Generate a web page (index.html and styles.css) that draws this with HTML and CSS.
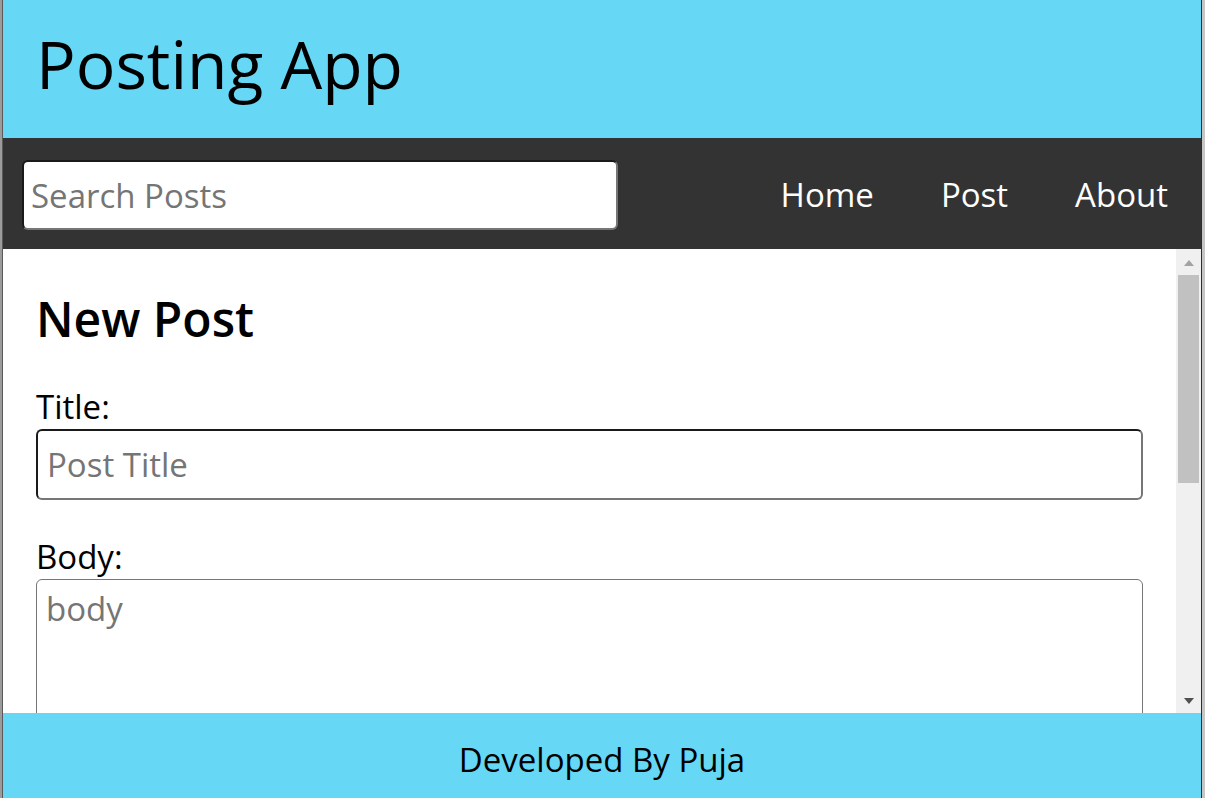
FILE: index.html
```html
<!DOCTYPE html>
<html lang="en">
<head>
<meta charset="utf-8">
<title>Posting App</title>
<link rel="stylesheet" href="styles.css">
</head>
<body>
<div class="frame">
  <div class="app">
    <header class="header">
      <h1 class="title">Posting App</h1>
    </header>
    <nav class="nav">
      <form class="search-form">
        <input class="search" type="text" placeholder="Search Posts">
      </form>
      <ul class="links">
        <li><a class="link" href="#">Home</a></li>
        <li><a class="link" href="#">Post</a></li>
        <li><a class="link" href="#">About</a></li>
      </ul>
    </nav>
    <main class="main">
      <div class="content">
        <h2 class="heading">New Post</h2>
        <form class="new-post">
          <label class="label" for="postTitle">Title:</label>
          <input class="field" id="postTitle" type="text" placeholder="Post Title">
          <label class="label label-body" for="postBody">Body:</label>
          <textarea class="area" id="postBody" placeholder="body"></textarea>
        </form>
      </div>
      <div class="scrollbar" aria-hidden="true">
        <div class="sb-btn sb-up"><span class="tri tri-up"></span></div>
        <div class="sb-track"><div class="sb-thumb"></div></div>
        <div class="sb-btn sb-down"><span class="tri tri-down"></span></div>
      </div>
    </main>
    <footer class="footer">
      <p class="credit">Developed By Puja</p>
    </footer>
  </div>
</div>
</body>
</html>
```

FILE: styles.css
```css
* {
  box-sizing: border-box;
}

html, body {
  margin: 0;
  padding: 0;
}

body {
  font-family: "Open Sans", "DejaVu Sans", sans-serif;
  font-size: 33px;
  color: #000;
  background: #fff;
}

.frame {
  height: 100vh;
  border-left: 2px solid #9b9b9b;
  border-right: 3px solid #c6c6c6;
}

.app {
  height: 100%;
  display: flex;
  flex-direction: column;
  border-left: 1px solid #5a5a5a;
  border-right: 1px solid #2e2e2e;
}

.header {
  flex: 0 0 138px;
  background: #66d7f5;
  padding: 18px 0 0 33px;
}

.title {
  margin: 0;
  font-size: 66px;
  font-weight: 400;
  line-height: normal;
}

.nav {
  flex: 0 0 111px;
  background: #333333;
  display: flex;
  align-items: center;
  justify-content: space-between;
  padding: 0 33px 0 19px;
}

.search-form {
  margin: 3px 0 0;
}

.search {
  display: block;
  width: 596px;
  height: 70px;
  font-family: inherit;
  font-size: 33px;
  padding: 0 7px;
  border: 2px solid;
  border-color: #1a1a1a #767676 #767676 #1a1a1a;
  border-radius: 6px;
  background: #fff;
  color: #000;
  outline: none;
}

.search::placeholder,
.field::placeholder,
.area::placeholder {
  color: #757575;
}

.links {
  display: flex;
  gap: 67px;
  list-style: none;
  margin: 2px 0 0;
  padding: 0;
}

.link {
  display: block;
  color: #fff;
  text-decoration: none;
  font-size: 33px;
  line-height: normal;
}

.main {
  flex: 1 1 auto;
  min-height: 0;
  display: flex;
  overflow: hidden;
}

.content {
  flex: 1 1 auto;
  min-width: 0;
  overflow: hidden;
  padding: 1px 33px 0;
}

.scrollbar {
  flex: 0 0 25px;
  display: flex;
  flex-direction: column;
  background: #f0f0f0;
}

.sb-btn {
  flex: 0 0 25px;
  display: flex;
  justify-content: center;
}

.sb-up {
  align-items: flex-start;
  padding-top: 11px;
}

.sb-down {
  align-items: flex-start;
  padding-top: 10px;
}

.tri {
  width: 0;
  height: 0;
  border-left: 5.5px solid transparent;
  border-right: 5.5px solid transparent;
}

.tri-up {
  border-bottom: 6px solid #a3a3a3;
}

.tri-down {
  border-top: 6px solid #505050;
}

.sb-track {
  flex: 1 1 auto;
  padding: 1px 2px 0;
}

.sb-thumb {
  height: 208px;
  background: #c1c1c1;
}

.heading {
  margin: 36px 0 33px;
  font-size: 48px;
  font-weight: 600;
  line-height: normal;
}

.new-post {
  display: flex;
  flex-direction: column;
}

.label {
  display: block;
  line-height: normal;
}

.label-body {
  margin-top: 34px;
}

.field {
  display: block;
  width: 100%;
  height: 71px;
  font-family: inherit;
  font-size: 33px;
  padding: 0 9px;
  border: 2px solid;
  border-color: #1a1a1a #767676 #767676 #1a1a1a;
  border-radius: 6px;
  background: #fff;
  outline: none;
}

.area {
  display: block;
  width: 100%;
  height: 420px;
  flex: 0 0 auto;
  font-family: inherit;
  font-size: 33px;
  line-height: normal;
  padding: 6px 9px;
  border: 1px solid #767676;
  border-radius: 6px;
  resize: none;
  background: #fff;
}

.footer {
  flex: 0 0 85px;
  background: #66d7f5;
  padding-top: 24px;
  text-align: center;
}

.credit {
  margin: 0;
  line-height: normal;
}
```
